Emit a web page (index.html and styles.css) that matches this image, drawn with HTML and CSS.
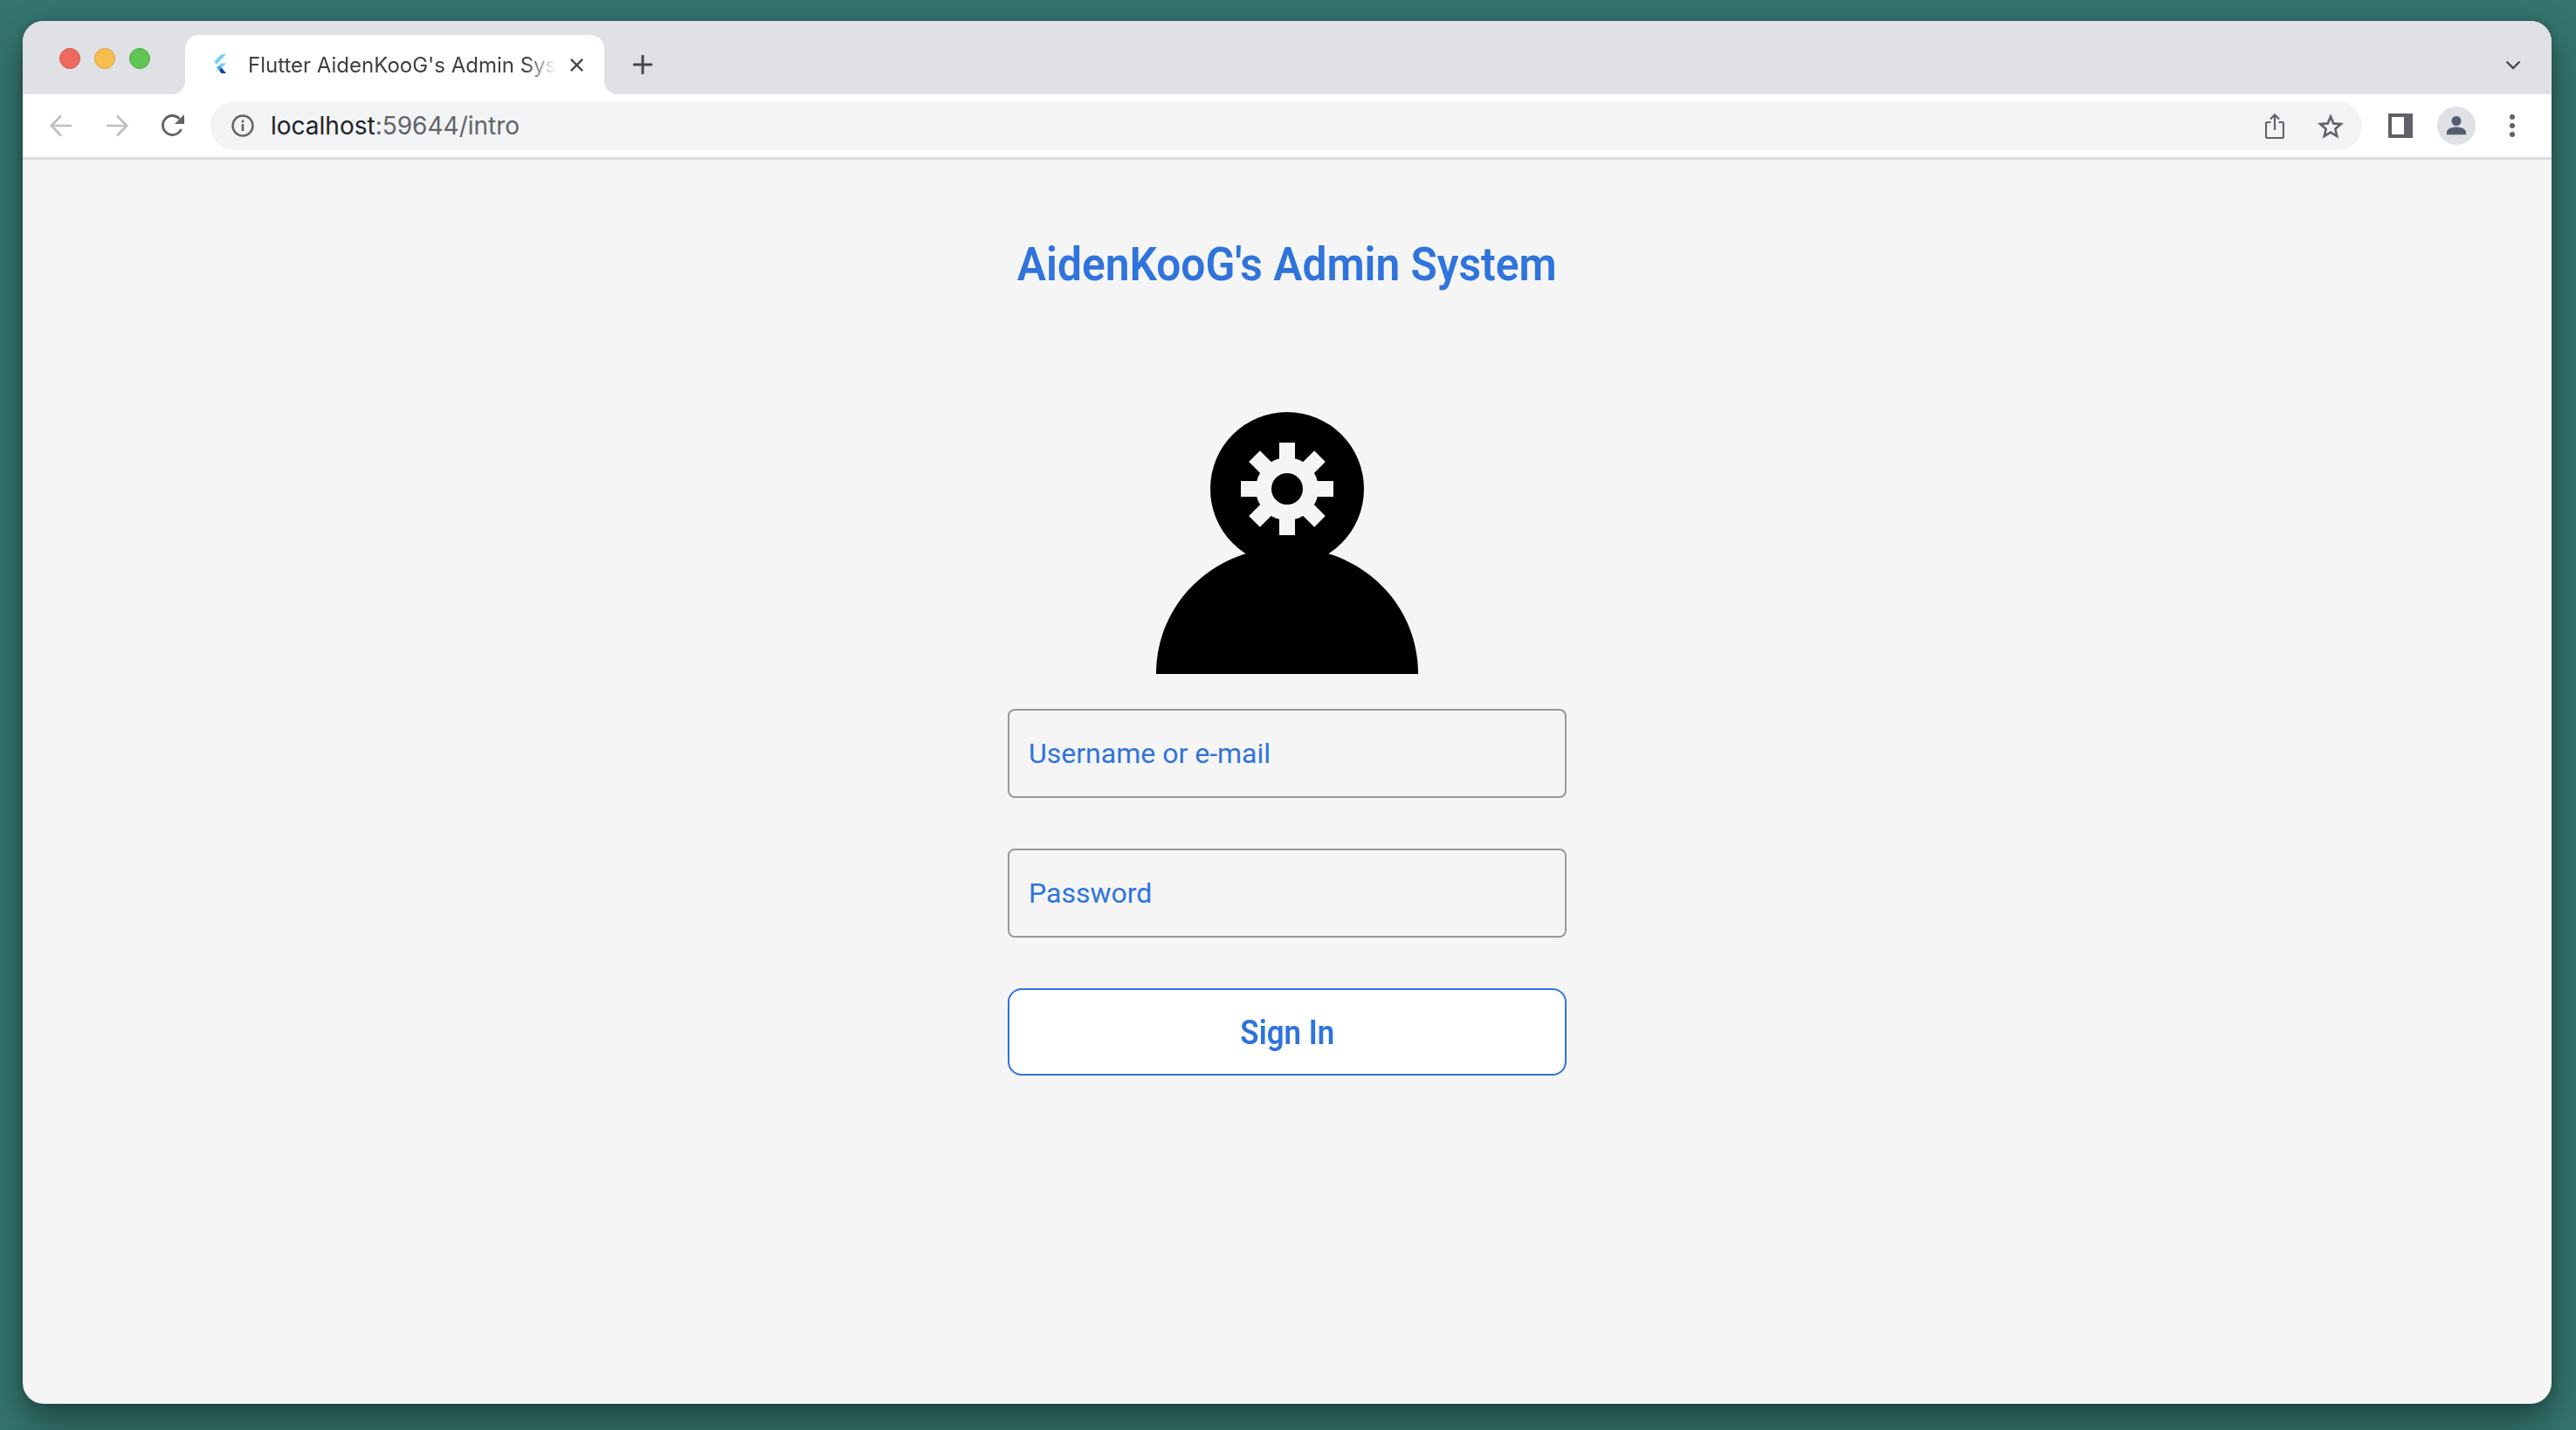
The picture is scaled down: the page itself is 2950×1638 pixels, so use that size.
FILE: index.html
```html
<!DOCTYPE html>
<html lang="en">
<head>
  <meta charset="UTF-8">
  <meta name="viewport" content="width=device-width, initial-scale=1.0">
  <title>Flutter AidenKooG's Admin System</title>
  <link rel="stylesheet" href="styles.css">
</head>
<body>
  <div class="window">
    <div class="tabstrip">
      <div class="lights">
        <span class="light red"></span>
        <span class="light yellow"></span>
        <span class="light green"></span>
      </div>
      <div class="tab">
        <svg class="favicon" viewBox="0 0 18 24">
          <polygon points="11,0 17,0 5,12 2.5,9" fill="#74cdf9"></polygon>
          <polygon points="17,11 11,11 5.5,16.5 8.5,19.5" fill="#74cdf9"></polygon>
          <polygon points="5.5,16.5 8.5,13.5 11.5,16.5 8.5,19.5" fill="#3ba9e6"></polygon>
          <polygon points="8.5,19.5 11.5,16.5 17,23 11,23" fill="#0b3f9c"></polygon>
        </svg>
        <span class="tab-title">Flutter AidenKooG's Admin Sys</span>
        <svg class="tab-close" viewBox="0 0 18 18">
          <path d="M2 2L16 16M16 2L2 16" stroke="#45474a" stroke-width="2.4" fill="none"></path>
        </svg>
      </div>
      <svg class="new-tab" viewBox="0 0 22 22">
        <path d="M11 1V21M1 11H21" stroke="#45474a" stroke-width="3" stroke-linecap="round" fill="none"></path>
      </svg>
      <svg class="tab-search" viewBox="0 0 18 11">
        <path d="M1.5 1.5L9 9L16.5 1.5" stroke="#45474a" stroke-width="2.4" fill="none"></path>
      </svg>
    </div>

    <div class="toolbar">
      <svg class="nav-icon" viewBox="0 0 26 26">
        <path d="M25 13H2M13 1.5L1.8 13L13 24.5" stroke="#bcbec1" stroke-width="2.6" fill="none"></path>
      </svg>
      <svg class="nav-icon" viewBox="0 0 26 26">
        <path d="M1 13H24M13 1.5L24.2 13L13 24.5" stroke="#bcbec1" stroke-width="2.6" fill="none"></path>
      </svg>
      <svg class="nav-icon reload" viewBox="0 0 28 28">
        <path d="M23.5 18A11 11 0 1 1 21.5 6" stroke="#5f6368" stroke-width="2.8" fill="none"></path>
        <polygon points="27,1 27,12 16,12" fill="#5f6368"></polygon>
      </svg>
      <div class="omnibox">
        <svg class="info-icon" viewBox="0 0 26 26">
          <circle cx="13" cy="13" r="11.5" stroke="#5f6368" stroke-width="2.4" fill="none"></circle>
          <rect x="11.7" y="11" width="2.6" height="8" fill="#5f6368"></rect>
          <rect x="11.7" y="6.6" width="2.6" height="2.8" fill="#5f6368"></rect>
        </svg>
        <span class="url"><span class="url-host">localhost</span>:59644/intro</span>
        <svg class="share-icon" viewBox="0 0 22 29">
          <path d="M6.5 10H2.5A1.5 1.5 0 0 0 1 11.5V26.5A1.5 1.5 0 0 0 2.5 28H19.5A1.5 1.5 0 0 0 21 26.5V11.5A1.5 1.5 0 0 0 19.5 10H15.5" stroke="#5f6368" stroke-width="2.2" fill="none"></path>
          <path d="M11 19V2M6 6.5L11 1.5L16 6.5" stroke="#5f6368" stroke-width="2.2" fill="none"></path>
        </svg>
        <svg class="star-icon" viewBox="0 0 30 29">
          <path d="M15 3.5L18.3 11.4L26.8 12.1L20.3 17.7L22.3 26L15 21.6L7.700 26L9.700 17.7L3.200 12.1L11.700 11.4Z" stroke="#5f6368" stroke-width="2.6" fill="none"></path>
        </svg>
      </div>
      <div class="panel-icon"><span class="panel-gap"></span></div>
      <div class="avatar">
        <svg viewBox="0 0 26 26">
          <circle cx="13" cy="7" r="6" fill="#535d70"></circle>
          <path d="M1 24V21C1 17 7 14.500 13 14.500S25 17 25 21V24Z" fill="#535d70"></path>
        </svg>
      </div>
      <div class="menu-dots">
        <span></span><span></span><span></span>
      </div>
    </div>

    <main class="page">
      <h1 class="app-title">AidenKooG's Admin System</h1>
      <svg class="admin-icon" viewBox="0 0 300 312">
        <circle cx="150" cy="100" r="88"></circle>
        <path d="M0 312C0 230 67 167 150 167S300 230 300 312Z"></path>
        <g fill="#f5f5f5">
          <circle cx="150" cy="100" r="36"></circle>
          <rect x="141" y="47" width="18" height="106"></rect>
          <rect x="141" y="47" width="18" height="106" transform="rotate(45 150 100)"></rect>
          <rect x="141" y="47" width="18" height="106" transform="rotate(90 150 100)"></rect>
          <rect x="141" y="47" width="18" height="106" transform="rotate(135 150 100)"></rect>
        </g>
        <circle cx="150" cy="100" r="18"></circle>
      </svg>
      <form class="login-form">
        <input class="field" type="text" placeholder="Username or e-mail">
        <input class="field" type="password" placeholder="Password">
        <button class="sign-in" type="button"><span class="sign-in-label">Sign In</span></button>
      </form>
    </main>
  </div>
</body>
</html>
```

FILE: styles.css
```css
html {
  box-sizing: border-box;
}
*, *:before, *:after {
  box-sizing: inherit;
}
body {
  margin: 0;
  height: 1638px;
  padding: 24px 28px 30px 26px;
  overflow: hidden;
  background: #35756f;
  font-family: Inter, "Liberation Sans", sans-serif;
}

.window {
  height: 100%;
  display: flex;
  flex-direction: column;
  border-radius: 24px;
  overflow: hidden;
  background: #f5f5f5;
  box-shadow: 0 20px 44px rgba(0, 0, 0, 0.42), 0 0 10px rgba(0, 0, 0, 0.2);
}

/* tab strip */
.tabstrip {
  height: 84px;
  display: flex;
  align-items: flex-end;
  background: #dfe1e5;
  flex-shrink: 0;
}
.lights {
  display: flex;
  gap: 16px;
  align-self: flex-start;
  margin: 31px 0 0 42px;
}
.light {
  width: 24px;
  height: 24px;
  border-radius: 50%;
}
.red { background: #ee6a5f; border: 1px solid #d5564c; }
.yellow { background: #f5be4f; border: 1px solid #d8a23d; }
.green { background: #61c554; border: 1px solid #4ea943; }

.tab {
  position: relative;
  width: 480px;
  height: 68px;
  margin-left: 40px;
  display: flex;
  align-items: center;
  padding: 0 22px 0 31px;
  background: #fff;
  border-radius: 16px 16px 0 0;
}
.tab:before, .tab:after {
  content: "";
  position: absolute;
  bottom: 0;
  width: 16px;
  height: 16px;
}
.tab:before {
  left: -16px;
  background: radial-gradient(circle at 0 0, transparent 16px, #fff 16.5px);
}
.tab:after {
  right: -16px;
  background: radial-gradient(circle at 100% 0, transparent 16px, #fff 16.5px);
}
.favicon {
  width: 17px;
  height: 23px;
  flex-shrink: 0;
  margin-bottom: 2px;
}
.tab-title {
  width: 353px;
  margin-left: 24px;
  font-size: 24px;
  color: #3c4043;
  white-space: nowrap;
  -webkit-mask-image: linear-gradient(to right, #000 90%, transparent 100%);
  mask-image: linear-gradient(to right, #000 90%, transparent 100%);
}
.tab-close {
  width: 17px;
  height: 17px;
  margin-left: 15px;
  flex-shrink: 0;
}
.new-tab {
  width: 22px;
  height: 22px;
  align-self: flex-start;
  margin: 39px 0 0 33px;
}
.tab-search {
  width: 18px;
  height: 11px;
  align-self: flex-start;
  margin: 45px 35px 0 auto;
}

/* toolbar */
.toolbar {
  height: 75px;
  flex-shrink: 0;
  display: flex;
  align-items: flex-start;
  padding: 8px 0 0 31px;
  background: #fff;
  border-bottom: 3px solid #dadce0;
}
.nav-icon {
  width: 26px;
  height: 26px;
  margin: 15px 38px 0 0;
}
.reload {
  width: 28px;
  height: 28px;
  margin: 14px 29px 0 -1px;
}
.omnibox {
  width: 2464px;
  height: 56px;
  display: flex;
  align-items: center;
  padding-left: 24px;
  border-radius: 28px;
  background: #f1f3f4;
}
.info-icon {
  width: 26px;
  height: 26px;
  flex-shrink: 0;
}
.url {
  margin-left: 19px;
  font-size: 28px;
  color: #5f6368;
}
.url-host {
  color: #202124;
}
.share-icon {
  width: 22px;
  height: 29px;
  margin-left: auto;
}
.star-icon {
  width: 30px;
  height: 29px;
  margin: 0 21px 0 38px;
}
.panel-icon {
  width: 28px;
  height: 28px;
  margin: 14px 0 0 30px;
  padding: 4px 10px 4px 4px;
  background: #5f6368;
}
.panel-gap {
  display: block;
  height: 100%;
  background: #fff;
}
.avatar {
  width: 44px;
  height: 44px;
  margin: 6px 0 0 28px;
  padding: 10px 9px;
  border-radius: 50%;
  background: #dfe1e5;
}
.avatar svg {
  display: block;
  width: 26px;
  height: 24px;
}
.menu-dots {
  display: flex;
  flex-direction: column;
  gap: 4px;
  margin: 15px 0 0 39px;
}
.menu-dots span {
  width: 6px;
  height: 6px;
  border-radius: 50%;
  background: #5f6368;
}

/* login page */
.page {
  flex: 1;
  display: flex;
  flex-direction: column;
  align-items: center;
  font-family: Roboto, "Liberation Sans", sans-serif;
}
.app-title {
  margin: 90px 0 0;
  font-size: 54px;
  line-height: 60px;
  font-weight: 600;
  color: #2f73dc;
  transform: scaleX(0.92);
}
.admin-icon {
  display: block;
  width: 300px;
  height: 312px;
  margin-top: 127px;
}
.login-form {
  width: 640px;
  margin-top: 40px;
  display: flex;
  flex-direction: column;
  gap: 58px;
}
.field {
  height: 102px;
  padding: 0 22px;
  border: 2px solid #999;
  border-radius: 8px;
  background: transparent;
  font-family: inherit;
  font-size: 32px;
}
.field::placeholder {
  color: #2f73dc;
  opacity: 1;
}
.sign-in {
  height: 100px;
  padding-top: 3px;
  border: 2px solid #2f73dc;
  border-radius: 16px;
  background: #fff;
  color: #2f73dc;
  font-family: inherit;
  font-size: 39px;
  font-weight: 600;
}
.sign-in-label {
  display: inline-block;
  transform: scaleX(0.895);
}
```
